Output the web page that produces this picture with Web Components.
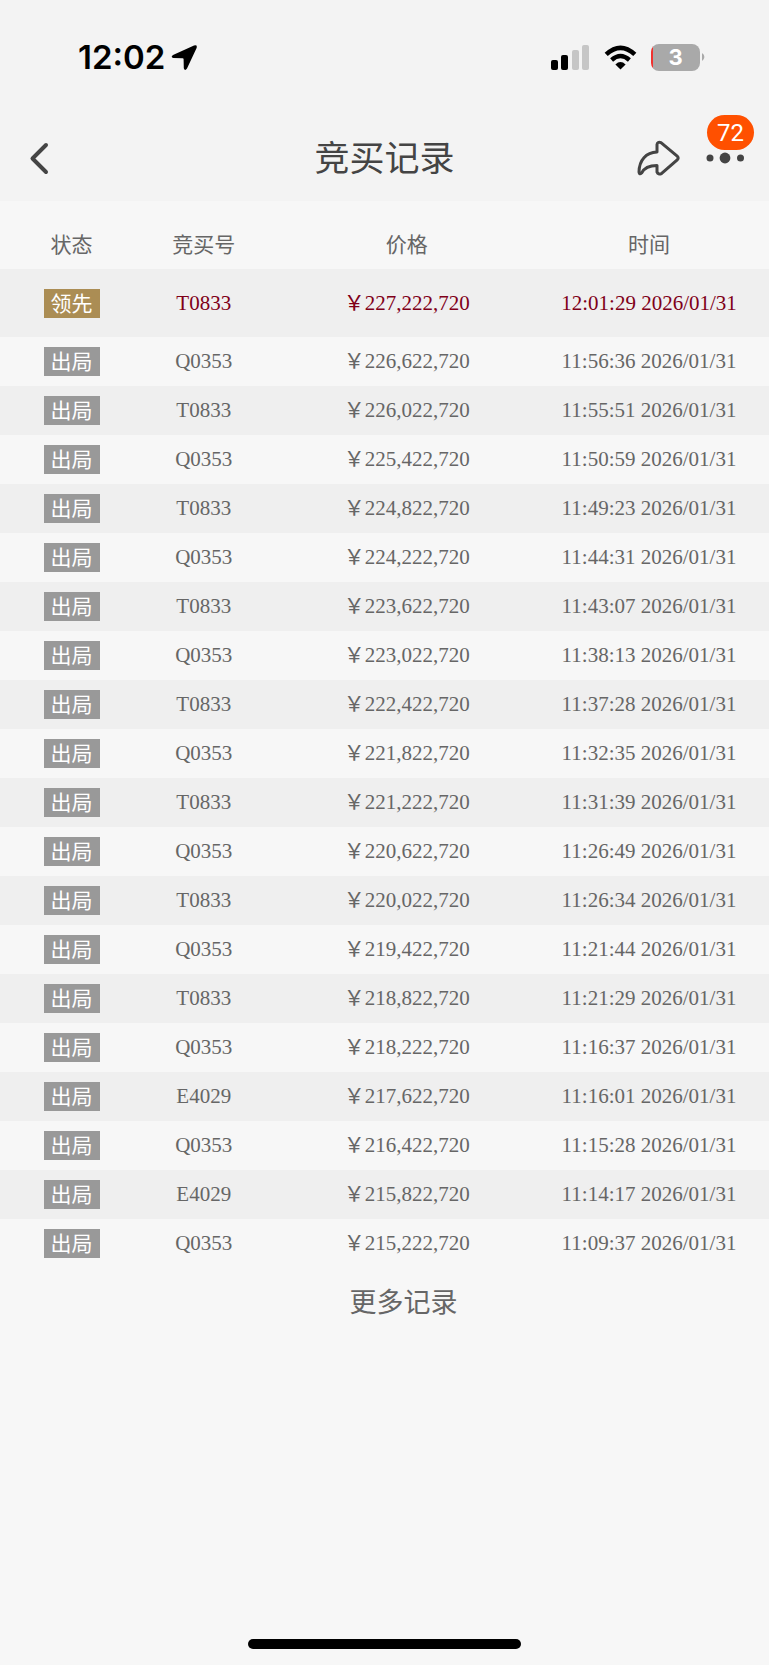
<!DOCTYPE html>
<html lang="zh-CN">
<head>
<meta charset="utf-8">
<meta name="viewport" content="width=device-width, initial-scale=1">
<title>竞买记录</title>
<style>
  body {
    margin: 0;
    background: #f7f7f7;
  }
</style>
</head>
<body>
<bid-app></bid-app>
<script>
class StatusBar extends HTMLElement {

  constructor () {
    super()
    this.shadow = this.attachShadow({ mode: 'open' })
  }

  connectedCallback () {
    this.render()
  }

  render () {
    this.shadow.innerHTML =
    /*html*/`
    <style>
      :host {
        display: flex;
        justify-content: space-between;
        align-items: center;
        height: 114px;
        padding: 0 64px 0 78px;
        font-family: Inter, "Liberation Sans", sans-serif;
        color: #000;
      }
      .side {
        display: flex;
        align-items: center;
      }
      .clock {
        font-size: 33px;
        font-weight: 600;
        line-height: 40px;
        margin-right: 6px;
      }
      .signal {
        margin-right: 14px;
      }
      .wifi {
        margin-right: 14px;
      }
      .battery {
        display: flex;
        align-items: center;
        gap: 1px;
      }
      .level {
        box-sizing: border-box;
        width: 49px;
        height: 27px;
        border-radius: 8px;
        background: linear-gradient(to right, #f0322f 2px, #a9a9a9 2px);
        color: #fff;
        font-size: 22px;
        font-weight: 700;
        line-height: 27px;
        text-align: center;
      }
      svg {
        display: block;
      }
    </style>
    <div class="side">
      <span class="clock">12:02</span>
      <svg width="27" height="27" viewBox="0 0 27 27" aria-hidden="true">
        <path d="M2 11 23 1.600Q26.600 0.400 25.600 4L16 24.600Q13.800 27.400 12.800 24.200L12.600 15.200Q12.600 14.200 11.600 14.200L2.400 14Q-0.800 13 2 11Z"/>
      </svg>
    </div>
    <div class="side">
      <svg class="signal" width="39" height="25" viewBox="0 0 39 25" aria-hidden="true">
        <rect x="0" y="15" width="7" height="10" rx="2"/>
        <rect x="10" y="10" width="7" height="15" rx="2"/>
        <rect x="21" y="5" width="7" height="20" rx="2" fill="#c6c6c6"/>
        <rect x="31" y="0" width="7" height="25" rx="2" fill="#c6c6c6"/>
      </svg>
      <svg class="wifi" width="33" height="25" viewBox="0 0 33 25" aria-hidden="true">
        <path d="M2.2 9.4Q16.5 -3.8 30.8 9.4" fill="none" stroke="#000" stroke-width="4.6"/>
        <path d="M7.6 15Q16.5 7 25.4 15" fill="none" stroke="#000" stroke-width="4.4"/>
        <path d="M11.4 19.4Q16.5 14.8 21.6 19.4L16.5 24.6Z"/>
      </svg>
      <div class="battery">
        <span class="level">3</span>
        <svg width="4" height="8" viewBox="0 0 4 8" aria-hidden="true">
          <path d="M1 0Q3.4 1.6 3.4 4T1 8Z" fill="#a9a9a9"/>
        </svg>
      </div>
    </div>
    `
  }
}

customElements.define('status-bar', StatusBar);

class NavBar extends HTMLElement {

  constructor () {
    super()
    this.shadow = this.attachShadow({ mode: 'open' })
  }

  connectedCallback () {
    this.render()
  }

  render () {
    this.shadow.innerHTML =
    /*html*/`
    <style>
      :host {
        display: grid;
        grid-template-columns: 1fr auto 1fr;
        align-items: center;
        height: 87px;
        padding: 0 24px;
        color: #444;
      }
      h1 {
        margin: 0;
        padding-bottom: 3px;
        font-size: 35px;
        font-weight: 400;
        line-height: 44px;
      }
      button {
        display: block;
        padding: 0;
        border: 0;
        background: none;
        color: inherit;
        font: inherit;
      }
      .actions {
        display: flex;
        justify-content: flex-end;
        align-items: center;
        gap: 24px;
      }
      .more {
        position: relative;
      }
      .count {
        position: absolute;
        right: -9px;
        bottom: 16px;
        width: 47px;
        height: 35px;
        border-radius: 18px;
        background: #ff5000;
        color: #fff;
        font-family: Roboto, sans-serif;
        font-size: 24px;
        line-height: 36px;
        text-align: center;
      }
      svg {
        display: block;
      }
    </style>
    <button type="button" aria-label="返回">
      <svg width="32" height="34" viewBox="0 0 32 34" fill="none" stroke="currentColor" stroke-width="4" stroke-linecap="round" stroke-linejoin="round">
        <path d="M22 4 8.500 17.500 22 31"/>
      </svg>
    </button>
    <h1><slot></slot></h1>
    <div class="actions">
      <button type="button" aria-label="分享">
        <svg width="44" height="36" viewBox="0 0 44 36" fill="none" stroke="currentColor" stroke-width="3" stroke-linejoin="round">
          <path d="M20 12V4.600Q20.400 1.400 24 2.600L40.200 16.200Q42.200 18 40.200 19.800L24.400 33.600Q21.400 35 20 32V25.400C12 25.400 7 28 4.600 33Q2.400 35 2 32C2.200 20 9 12.400 20 12Z"/>
        </svg>
      </button>
      <button type="button" class="more" aria-label="更多">
        <svg width="40" height="16" viewBox="0 0 40 16" fill="currentColor">
          <circle cx="5" cy="8" r="3.500"/>
          <circle cx="20" cy="8" r="5.400"/>
          <circle cx="35.500" cy="8" r="3.500"/>
        </svg>
        <span class="count">72</span>
      </button>
    </div>
    `
  }
}

customElements.define('nav-bar', NavBar);

class BidTable extends HTMLElement {

  constructor () {
    super()
    this.shadow = this.attachShadow({ mode: 'open' })
  }

  connectedCallback () {
    this.render()
  }

  render () {
    this.shadow.innerHTML =
    /*html*/`
    <style>
      :host {
        display: block;
        color: #666;
      }
      table {
        width: 100%;
        table-layout: fixed;
        border-collapse: collapse;
        font-size: 21px;
        line-height: 29px;
        text-align: center;
      }
      .state { width: 18.6%; }
      .bidder { width: 15.8%; }
      .price { width: 37%; }
      th, td {
        padding: 0;
        font-weight: 400;
        white-space: nowrap;
      }
      th:last-child, td:last-child {
        padding-right: 20px;
      }
      thead th {
        height: 68px;
        padding-top: 16px;
        box-sizing: border-box;
      }
      td {
        height: 49px;
        font-family: "Liberation Serif", "Noto Sans CJK SC", serif;
      }
      tbody tr:nth-child(odd) {
        background: #efefef;
      }
      tbody tr.lead {
        color: #7f0019;
      }
      .lead td {
        height: 68px;
      }
      .tag {
        display: block;
        width: fit-content;
        margin: 0 auto;
        padding: 0 7px 3px;
        background: #999;
        color: #fff;
        font-family: "Noto Sans CJK SC", sans-serif;
        line-height: 26px;
      }
      .lead .tag {
        background: #ab8d54;
      }
    </style>
    <table>
      <colgroup>
        <col class="state"><col class="bidder"><col class="price"><col>
      </colgroup>
      <thead>
        <tr>
          <th scope="col">状态</th>
          <th scope="col">竞买号</th>
          <th scope="col">价格</th>
          <th scope="col">时间</th>
        </tr>
      </thead>
      <tbody></tbody>
    </table>
    `
    const bids = [
      ['T0833', '227,222,720', '12:01:29'],
      ['Q0353', '226,622,720', '11:56:36'],
      ['T0833', '226,022,720', '11:55:51'],
      ['Q0353', '225,422,720', '11:50:59'],
      ['T0833', '224,822,720', '11:49:23'],
      ['Q0353', '224,222,720', '11:44:31'],
      ['T0833', '223,622,720', '11:43:07'],
      ['Q0353', '223,022,720', '11:38:13'],
      ['T0833', '222,422,720', '11:37:28'],
      ['Q0353', '221,822,720', '11:32:35'],
      ['T0833', '221,222,720', '11:31:39'],
      ['Q0353', '220,622,720', '11:26:49'],
      ['T0833', '220,022,720', '11:26:34'],
      ['Q0353', '219,422,720', '11:21:44'],
      ['T0833', '218,822,720', '11:21:29'],
      ['Q0353', '218,222,720', '11:16:37'],
      ['E4029', '217,622,720', '11:16:01'],
      ['Q0353', '216,422,720', '11:15:28'],
      ['E4029', '215,822,720', '11:14:17'],
      ['Q0353', '215,222,720', '11:09:37']
    ];
    // the newest bid comes first and leads
    this.shadow.querySelector('tbody').innerHTML = bids.map(([bidder, price, time], i) => `
      <tr class="${i === 0 ? 'lead' : 'out'}">
        <td><span class="tag">${i === 0 ? '领先' : '出局'}</span></td>
        <td>${bidder}</td>
        <td>￥${price}</td>
        <td>${time} 2026/01/31</td>
      </tr>`).join('');
  }
}

customElements.define('bid-table', BidTable);

class BidApp extends HTMLElement {

  constructor () {
    super()
    this.shadow = this.attachShadow({ mode: 'open' })
  }

  connectedCallback () {
    this.render()
  }

  render () {
    this.shadow.innerHTML =
    /*html*/`
    <style>
      :host {
        display: flex;
        flex-direction: column;
        min-height: 100vh;
        font-family: "Noto Sans CJK SC", sans-serif;
      }
      header {
        background: #f3f3f3;
      }
      main {
        flex: 1;
        display: flex;
        flex-direction: column;
      }
      .load {
        margin: 13px 0 0 38px;
        padding: 0;
        border: 0;
        background: none;
        color: #666;
        font: inherit;
        font-size: 27px;
        line-height: 40px;
      }
      .home {
        width: 35.6%;
        height: 10px;
        margin: 16px auto;
        border-radius: 5px;
        background: #000;
      }
    </style>
    <header>
      <status-bar></status-bar>
      <nav-bar>竞买记录</nav-bar>
    </header>
    <main>
      <bid-table></bid-table>
      <button type="button" class="load">更多记录</button>
    </main>
    <div class="home"></div>
    `
  }
}

customElements.define('bid-app', BidApp);
</script>
</body>
</html>
